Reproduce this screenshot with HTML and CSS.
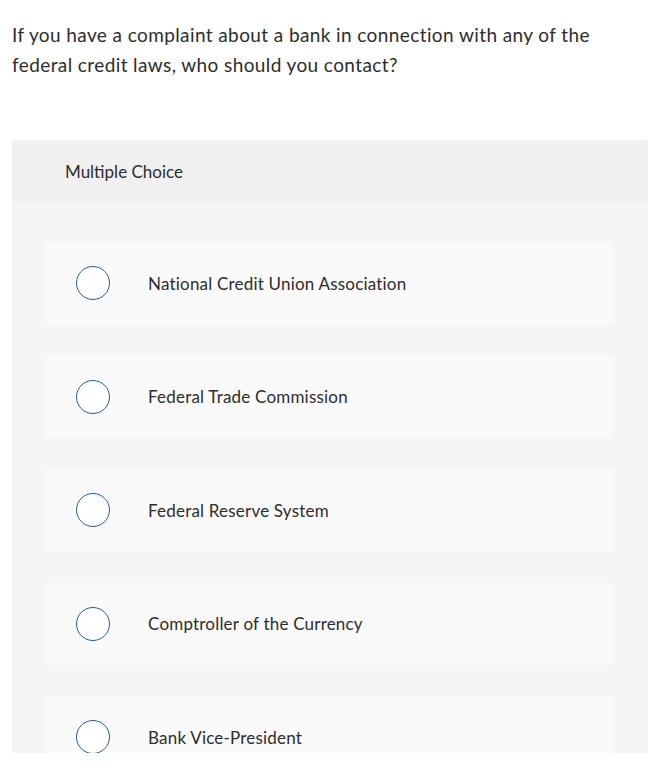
FILE: index.html
```html
<!DOCTYPE html>
<html>
<head>
<meta charset="utf-8">
<link rel="stylesheet" href="styles.css">
</head>
<body>
<div class="page">
  <p class="question">If you have a complaint about a bank in connection with any of the federal credit laws, who should you contact?</p>
  <div class="card">
    <div class="card-head">Multiple Choice</div>
    <div class="card-body">
      <div class="option"><span class="radio"></span><span class="label">National Credit Union Association</span></div>
      <div class="option"><span class="radio"></span><span class="label">Federal Trade Commission</span></div>
      <div class="option"><span class="radio"></span><span class="label">Federal Reserve System</span></div>
      <div class="option"><span class="radio"></span><span class="label">Comptroller of the Currency</span></div>
      <div class="option"><span class="radio"></span><span class="label">Bank Vice-President</span></div>
    </div>
  </div>
</div>
</body>
</html>
```

FILE: styles.css
```css
html, body {
  margin: 0;
  padding: 0;
  background: #ffffff;
}
body {
  font-family: Lato, "Liberation Sans", sans-serif;
  color: #2d2d2d;
}
.page {
  padding: 20px 15px 0 12px;
}
.question {
  margin: 0;
  font-size: 19px;
  letter-spacing: 0.4px;
  line-height: 30px;
  width: 610px;
}
.card {
  margin-top: 60px;
  height: 613px;
  overflow: hidden;
  border-radius: 3px 3px 0 0;
  background: #f5f5f5;
}
.card-head {
  height: 62px;
  background: #f0f0f0;
  display: flex;
  align-items: center;
  padding-left: 53px;
  font-size: 17px;
}
.card-body {
  padding: 40px 35px 0 33px;
  display: flex;
  flex-direction: column;
  gap: 31.5px;
}
.option {
  height: 82px;
  flex: none;
  background: #fafafa;
  border-radius: 3px;
  display: flex;
  align-items: center;
  padding-left: 31px;
}
.radio {
  width: 32px;
  height: 32px;
  border: 1.5px solid #255d96;
  border-radius: 50%;
  background: #ffffff;
  flex: none;
}
.label {
  margin-left: 38px;
  font-size: 17px;
  letter-spacing: 0.2px;
}
```
